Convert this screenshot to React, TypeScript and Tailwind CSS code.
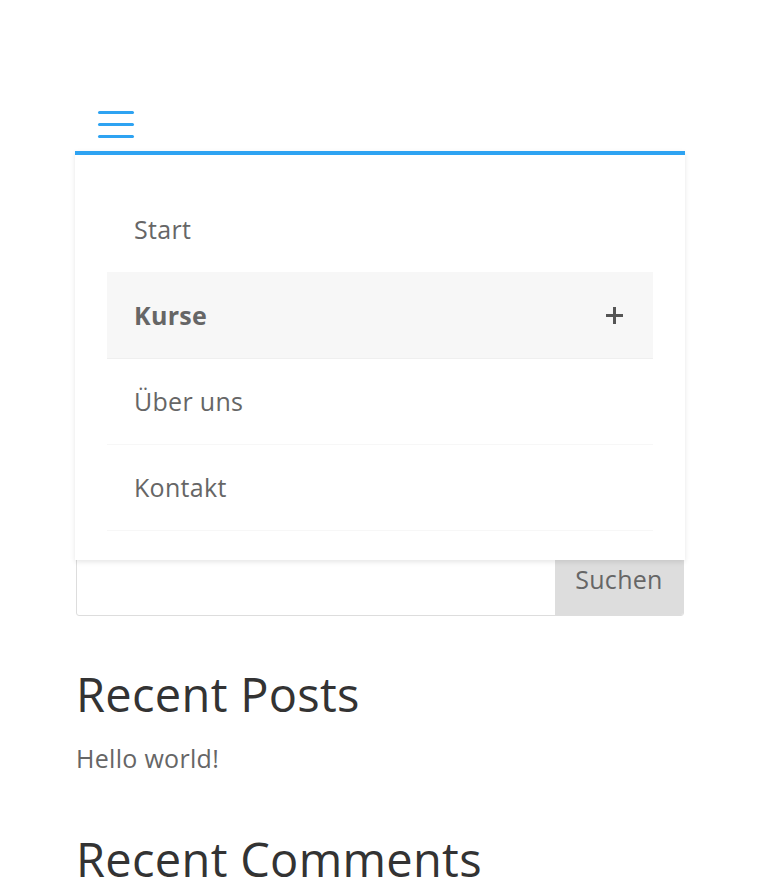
const menuItems = [
  { label: "Start" },
  { label: "Kurse", active: true, sub: true },
  { label: "Über uns" },
  { label: "Kontakt" },
];

function Hamburger() {
  return (
    <button className="flex flex-col gap-[9px] ml-[22px]" aria-label="Menü">
      <span className="block w-[36px] h-[3px] rounded-full bg-[#2ea3f2]" />
      <span className="block w-[36px] h-[3px] rounded-full bg-[#2ea3f2]" />
      <span className="block w-[36px] h-[3px] rounded-full bg-[#2ea3f2]" />
    </button>
  );
}

function MobileMenu() {
  return (
    <nav className="absolute left-[-1px] right-[-1px] top-full z-10 bg-white border-t-4 border-[#2ea3f2] px-[32px] pt-[32px] pb-[29px] shadow-[0_2px_5px_rgba(0,0,0,0.1)]">
      <ul>
        {menuItems.map((item) => (
          <li
            key={item.label}
            className={`flex items-center justify-between h-[86px] pl-[27px] pr-[30px] border-b border-[rgba(0,0,0,0.03)] ${
              item.active ? "bg-[rgba(0,0,0,0.03)] font-bold" : ""
            }`}
          >
            <span className="text-[25px] tracking-[0.3px] text-[#666]">{item.label}</span>
            {item.sub && (
              <span className="relative block w-[17px] h-[17px]">
                <span className="absolute left-0 top-[7px] w-[17px] h-[3px] bg-[#555]" />
                <span className="absolute top-0 left-[7px] w-[3px] h-[17px] bg-[#555]" />
              </span>
            )}
          </li>
        ))}
      </ul>
    </nav>
  );
}

export default function App() {
  return (
    <div className="min-h-[881px] bg-white overflow-hidden" style={{ fontFamily: '"Open Sans", "Liberation Sans", sans-serif' }}>
      <div className="w-[608px] mx-auto">
        {/* Header with open mobile menu */}
        <header className="relative pt-[111px] pb-[13px]">
          <Hamburger />
          <MobileMenu />
        </header>

        {/* Search widget */}
        <form className="mt-[393px] flex h-[72px] border border-[#ddd] rounded-[3px] overflow-hidden">
          <input className="flex-1 outline-none px-3" type="text" />
          <button type="button" className="w-[128px] bg-[#ddd] text-[25px] tracking-[0.3px] text-[#666]">
            Suchen
          </button>
        </form>

        <h2 className="mt-[51px] text-[47px] leading-[55px] tracking-[0.3px] text-[#333]">Recent Posts</h2>
        <p className="mt-[18px] text-[25px] leading-[36px] tracking-[0.3px] text-[#666]">Hello world!</p>

        <h2 className="mt-[56px] text-[47px] leading-[55px] tracking-[0.3px] text-[#333]">Recent Comments</h2>
      </div>
    </div>
  );
}
